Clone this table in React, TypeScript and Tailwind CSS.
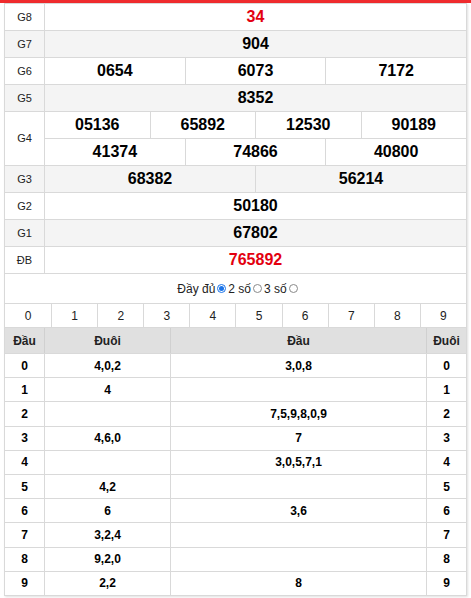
const topRows: { label: string; cells: string[]; red?: boolean }[] = [
  { label: "G8", cells: ["34"], red: true },
  { label: "G7", cells: ["904"] },
  { label: "G6", cells: ["0654", "6073", "7172"] },
  { label: "G5", cells: ["8352"] },
]

const bottomRows: { label: string; cells: string[]; red?: boolean }[] = [
  { label: "G3", cells: ["68382", "56214"] },
  { label: "G2", cells: ["50180"] },
  { label: "G1", cells: ["67802"] },
  { label: "ĐB", cells: ["765892"], red: true },
]

const loto: [string, string, string, string][] = [
  ["0", "4,0,2", "3,0,8", "0"],
  ["1", "4", "", "1"],
  ["2", "", "7,5,9,8,0,9", "2"],
  ["3", "4,6,0", "7", "3"],
  ["4", "", "3,0,5,7,1", "4"],
  ["5", "4,2", "", "5"],
  ["6", "6", "3,6", "6"],
  ["7", "3,2,4", "", "7"],
  ["8", "9,2,0", "", "8"],
  ["9", "2,2", "8", "9"],
]

function Cells({ cells, red }: { cells: string[]; red?: boolean }) {
  return (
    <div className="flex flex-1 h-full">
      {cells.map((c, i) => (
        <div
          key={i}
          className={`flex flex-1 items-center justify-center text-[16px] font-bold ${
            i > 0 ? "border-l border-[#d9d9d9]" : ""
          } ${red ? "text-[#e3000f]" : "text-black"}`}
        >
          {c}
        </div>
      ))}
    </div>
  )
}

function PrizeRow({ label, cells, red, odd }: { label: string; cells: string[]; red?: boolean; odd: boolean }) {
  return (
    <div className={`flex h-[27px] border-b border-[#d9d9d9] ${odd ? "bg-[#f4f4f4]" : "bg-white"}`}>
      <div className="flex w-[40px] items-center justify-center border-r border-[#d9d9d9] text-[11px] text-[#222]">
        {label}
      </div>
      <Cells cells={cells} red={red} />
    </div>
  )
}

function Radio({ checked }: { checked?: boolean }) {
  return checked ? (
    <span className="mx-[2px] inline-flex h-[9px] w-[9px] items-center justify-center rounded-full border border-[#1a73e8] bg-white">
      <span className="h-[5px] w-[5px] rounded-full bg-[#1a73e8]" />
    </span>
  ) : (
    <span className="mx-[2px] inline-block h-[9px] w-[9px] rounded-full border border-[#8a8a8a] bg-white" />
  )
}

export default function App() {
  return (
    <div className="min-h-screen bg-white font-['Liberation_Sans',Arial,sans-serif]">
      <div className="h-[3px] bg-[#ef2b2d]" />
      <div className="ml-[4px] w-[463px] border-x border-t border-[#d9d9d9] shadow-[1px_1px_2px_rgba(0,0,0,0.12)]">
        {topRows.map((r, i) => (
          <PrizeRow key={r.label} {...r} odd={i % 2 === 1} />
        ))}

        <div className="flex h-[54px] border-b border-[#d9d9d9] bg-white">
          <div className="flex w-[40px] items-center justify-center border-r border-[#d9d9d9] text-[11px] text-[#222]">
            G4
          </div>
          <div className="flex flex-1 flex-col">
            <div className="h-[27px] border-b border-[#d9d9d9]">
              <Cells cells={["05136", "65892", "12530", "90189"]} />
            </div>
            <div className="h-[26px]">
              <Cells cells={["41374", "74866", "40800"]} />
            </div>
          </div>
        </div>

        {bottomRows.map((r, i) => (
          <PrizeRow key={r.label} {...r} odd={i % 2 === 0} />
        ))}

        <div className="flex h-[30px] items-center justify-center border-b border-[#d9d9d9] pl-[6px] text-[12px] text-[#222]">
          <span>Đầy đủ</span>
          <Radio checked />
          <span>2 số</span>
          <Radio />
          <span>3 số</span>
          <Radio />
        </div>

        <div className="grid h-[24px] grid-cols-10 border-b border-[#d9d9d9]">
          {Array.from({ length: 10 }, (_, i) => (
            <div
              key={i}
              className={`flex items-center justify-center text-[12px] text-[#222] ${
                i > 0 ? "border-l border-[#d9d9d9]" : ""
              }`}
            >
              {i}
            </div>
          ))}
        </div>

        <div className="flex h-[26px] border-b border-[#d9d9d9] bg-[#e0e0e0] text-[12px] font-bold text-[#222]">
          <div className="flex w-[40px] items-center justify-center border-r border-[#d0d0d0]">Đầu</div>
          <div className="flex w-[126px] items-center justify-center border-r border-[#d0d0d0]">Đuôi</div>
          <div className="flex w-[256px] items-center justify-center border-r border-[#d0d0d0]">Đầu</div>
          <div className="flex flex-1 items-center justify-center">Đuôi</div>
        </div>

        {loto.map((r) => (
          <div key={r[0]} className="flex h-[24.2px] border-b border-[#d9d9d9] bg-white text-[12px] font-bold text-black">
            <div className="flex w-[40px] items-center justify-center border-r border-[#d9d9d9]">{r[0]}</div>
            <div className="flex w-[126px] items-center justify-center border-r border-[#d9d9d9]">{r[1]}</div>
            <div className="flex w-[256px] items-center justify-center border-r border-[#d9d9d9]">{r[2]}</div>
            <div className="flex flex-1 items-center justify-center">{r[3]}</div>
          </div>
        ))}
      </div>
    </div>
  )
}
